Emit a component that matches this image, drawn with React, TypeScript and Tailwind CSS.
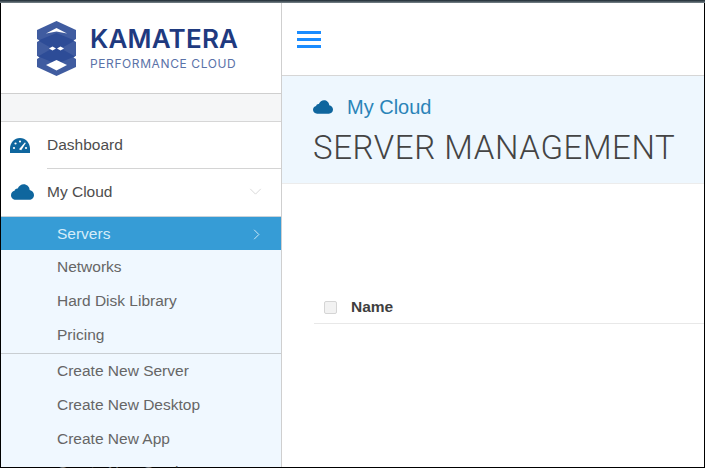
const subItems = ["Networks", "Hard Disk Library", "Pricing"];
const createItems = ["Create New Server", "Create New Desktop", "Create New App", "Create New Service"];

function Logo() {
  return (
    <svg width="39" height="55" viewBox="0 0 39 55" className="shrink-0">
      <g fill="#2b4a96" fillOpacity="0.9">
        <polygon points="0,9 19.5,0 39,9 39,19 19.5,30 0,19" />
        <polygon points="0,20 19.5,12 39,20 39,35 19.5,43 0,35" />
        <polygon points="0,36 19.5,25 39,36 39,46 19.5,55 0,46" />
      </g>
      <g fill="#ffffff">
        <polygon points="19.5,7 30,12.500 19.500,10.500 9,12.500" />
        <polygon points="19.5,39 30,44 19.5,49.500 9,44" />
        <polygon points="12,27.500 15.500,25.500 19,27.500 15.500,29.500" />
        <polygon points="20,27.500 23.500,25.500 27,27.500 23.500,29.500" />
        <polygon points="0,18 2.500,19.500 0,21" />
        <polygon points="39,18 36.500,19.500 39,21" />
        <polygon points="0,35 2.500,36.500 0,38" />
        <polygon points="39,35 36.500,36.500 39,38" />
      </g>
    </svg>
  );
}

function CloudIcon({ className }: { className: string }) {
  return (
    <svg viewBox="0 0 24 16" className={className} fill="#0f669e">
      <path d="M5 16C2.2 16 0 14 0 11.3 0 9 1.6 7.2 3.7 6.8 4 5.2 5.400 4.200 7 4.400 8.200 1.800 10.500 0 13.200 0c3.300 0 6 2.500 6.300 5.800C22 6.300 24 8.500 24 11c0 2.800-2.200 5-5 5H5z" />
    </svg>
  );
}

function GaugeIcon() {
  return (
    <svg viewBox="0 0 20 15" className="h-[15px] w-[20px]">
      <path d="M0 15C-.4 13.800 0 12 0 10.500 0 4.700 4.500 0 10 0s10 4.700 10 10.500c0 1.500.4 3.300 0 4.500H0z" fill="#0f669e" />
      <g fill="#ffffff">
        <circle cx="4" cy="10" r="1.100" />
        <circle cx="5.500" cy="5.500" r="1.100" />
        <circle cx="10" cy="3.500" r="1.100" />
        <circle cx="16" cy="10" r="1.100" />
        <polygon points="14.800,4.500 15.800,5.100 11.200,12.300 9,11.200" />
      </g>
    </svg>
  );
}

export default function App() {
  return (
    <div className="flex h-[468px] w-[705px] flex-col overflow-hidden bg-white font-['Liberation_Sans',sans-serif] text-[#4d4d4d]">
      <div className="h-[3px] shrink-0 bg-gradient-to-b from-[#1d2a33] to-[#7b878d]" />
      <div className="flex min-h-0 flex-1 border-b border-l border-r border-black">
        <aside className="flex w-[281px] shrink-0 flex-col border-r border-[#cfcfcf]">
          <div className="flex h-[91px] shrink-0 items-center gap-[14px] border-b border-[#cfcfcf] pl-[36px] pt-[1px]">
            <Logo />
            <div className="mb-[3px] flex flex-col">
              <span className="font-['Inter',sans-serif] text-[26px] leading-[30px] font-semibold tracking-[0.2px] text-[#1f3a7f]">KAMATERA</span>
              <span className="mt-[3px] font-['Inter',sans-serif] text-[12px] leading-[14px] tracking-[0.6px] text-[#5a72a8]">PERFORMANCE CLOUD</span>
            </div>
          </div>
          <div className="h-[28px] shrink-0 border-b border-[#d6d6d6] bg-[#f5f6f7]" />
          <div className="flex h-[46px] shrink-0 items-center pl-[9px]">
            <GaugeIcon />
            <span className="ml-[17px] text-[15.500px]">Dashboard</span>
          </div>
          <div className="ml-[46px] h-px shrink-0 bg-[#d4d4d4]" />
          <div className="flex h-[47px] shrink-0 items-center pb-[2px] pl-[10px]">
            <CloudIcon className="h-[16px] w-[23px]" />
            <span className="ml-[13px] text-[15.500px]">My Cloud</span>
            <svg viewBox="0 0 14 8" className="ml-auto mr-[19px] h-[7px] w-[13px]" fill="none" stroke="#d3d3d3" strokeWidth="1">
              <path d="M1 1l6 6 6-6" />
            </svg>
          </div>
          <div className="flex h-[34px] shrink-0 items-center border-t border-[#c9d3da] bg-[#369cd6] pl-[56px] pt-px text-[15.500px] text-[#d5ecf9]">
            Servers
            <svg viewBox="0 0 8 14" className="ml-auto mr-[21px] h-[11px] w-[7px]" fill="none" stroke="#d5ecf9" strokeWidth="1.200">
              <path d="M1 1l6 6-6 6" />
            </svg>
          </div>
          <div className="flex min-h-0 flex-1 flex-col bg-[#f0f8ff] pl-[56px] text-[15.500px] text-[#666666]">
            {subItems.map((item) => (
              <div key={item} className="flex h-[33.700px] shrink-0 items-center">{item}</div>
            ))}
            <div className="-ml-[56px] mt-[2px] h-px shrink-0 bg-[#c9ced2]" />
            <div>
              {createItems.map((item) => (
                <div key={item} className="flex h-[33.700px] items-center">{item}</div>
              ))}
            </div>
          </div>
        </aside>
        <main className="flex min-w-0 flex-1 flex-col">
          <div className="flex h-[73px] shrink-0 items-center border-b border-[#d6d6d6] pl-[15px]">
            <div className="flex w-[24px] flex-col gap-[4px]">
              <div className="h-[3px] bg-[#1a8cff]" />
              <div className="h-[3px] bg-[#1a8cff]" />
              <div className="h-[3px] bg-[#1a8cff]" />
            </div>
          </div>
          <div className="h-[108px] shrink-0 border-b border-[#ececec] bg-[#eef7fe] pl-[31px] pt-[17px]">
            <div className="flex items-center gap-[14px]">
              <CloudIcon className="h-[14px] w-[20px]" />
              <span className="text-[20px] leading-[28px] text-[#2a84b8]">My Cloud</span>
            </div>
            <h1 className="mt-[7px] font-['Roboto',sans-serif] text-[33px] leading-[40px] font-light tracking-[0.600px] whitespace-nowrap text-[#444444]">SERVER MANAGEMENT</h1>
          </div>
          <div className="ml-[32px] mt-[107px] flex h-[33px] shrink-0 items-center border-b border-[#e8e8e8] pl-[10px]">
            <div className="h-[13px] w-[13px] rounded-[2px] border border-[#d5d5d5] bg-[#f2f2f2]" />
            <span className="ml-[14px] text-[15.500px] font-bold text-[#3f3f3f]">Name</span>
          </div>
        </main>
      </div>
    </div>
  );
}
